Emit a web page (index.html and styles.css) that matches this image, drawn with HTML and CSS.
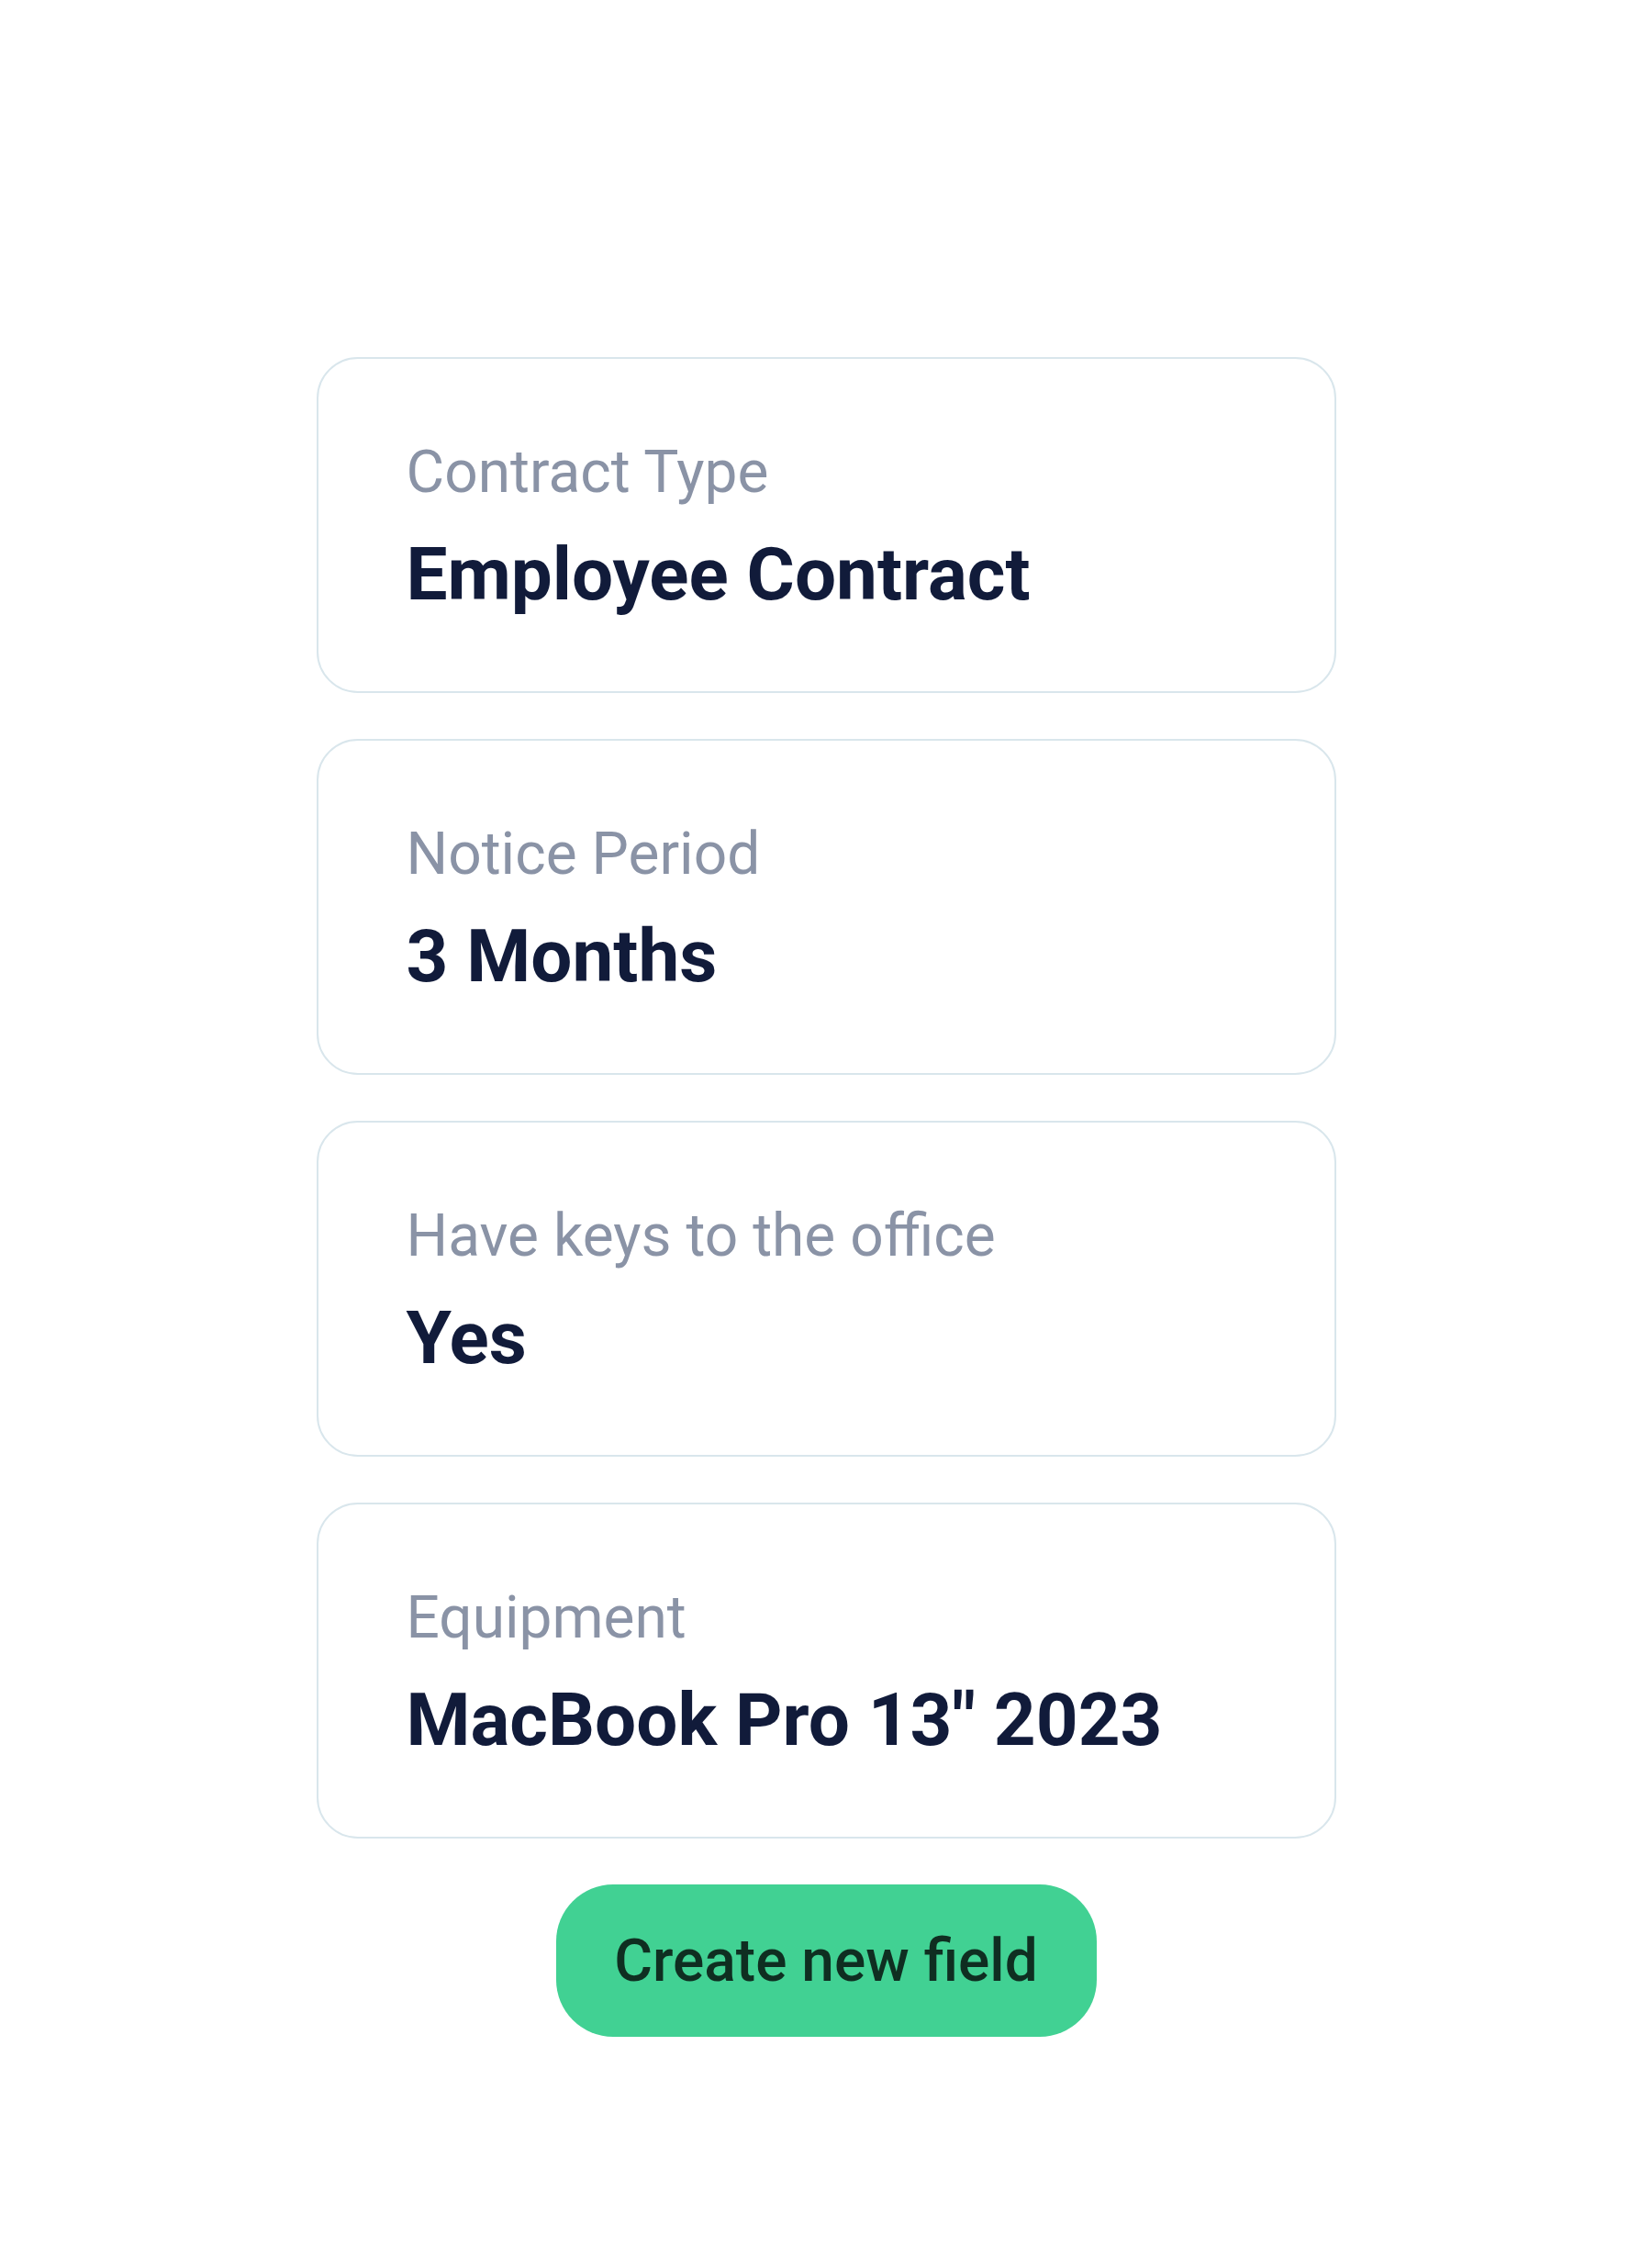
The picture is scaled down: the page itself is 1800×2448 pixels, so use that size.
FILE: index.html
```html
<!DOCTYPE html>
<html lang="en">
<head>
<meta charset="utf-8">
<title>Fields</title>
<link rel="stylesheet" href="styles.css">
</head>
<body>
<main class="fields">
  <section class="field-card">
    <div class="field-label">Contract Type</div>
    <div class="field-value">Employee Contract</div>
  </section>
  <section class="field-card">
    <div class="field-label">Notice Period</div>
    <div class="field-value">3 Months</div>
  </section>
  <section class="field-card">
    <div class="field-label">Have keys to the office</div>
    <div class="field-value">Yes</div>
  </section>
  <section class="field-card">
    <div class="field-label">Equipment</div>
    <div class="field-value">MacBook Pro 13" 2023</div>
  </section>
  <button class="create-btn" type="button">Create new field</button>
</main>
</body>
</html>
```

FILE: styles.css
```css
html, body {
  margin: 0;
  padding: 0;
  background: #ffffff;
}

body {
  font-family: Roboto, "Liberation Sans", Arial, sans-serif;
}

.fields {
  width: 1111px;
  margin: 0 auto;
  padding-top: 389px;
  display: flex;
  flex-direction: column;
  gap: 50px;
}

.field-card {
  box-sizing: border-box;
  height: 366px;
  border: 2px solid #d9e6ec;
  border-radius: 45px;
  padding: 86px 62px 0 96px;
  display: flex;
  flex-direction: column;
  gap: 25px;
}

.field-label {
  font-size: 64px;
  line-height: 76px;
  font-weight: 400;
  color: #8a93a6;
}

.field-value {
  font-size: 80px;
  line-height: 96px;
  font-weight: 700;
  color: #111b3a;
}

.create-btn {
  align-self: center;
  width: 589px;
  height: 166px;
  border: none;
  border-radius: 62px;
  background: #41d193;
  color: #0f2e21;
  font-family: Roboto, "Liberation Sans", Arial, sans-serif;
  font-size: 64px;
  font-weight: 500;
  padding: 0;
  cursor: pointer;
}
```
